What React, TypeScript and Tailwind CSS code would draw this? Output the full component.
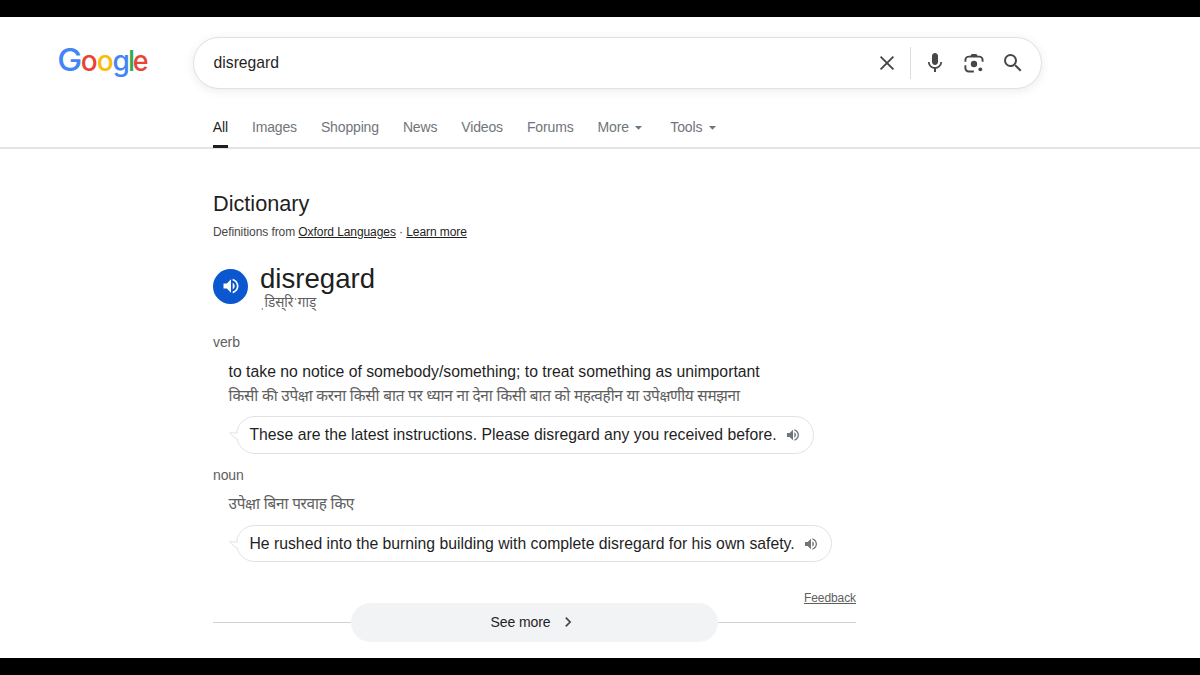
import { ReactNode } from "react";
import { MdArrowDropDown, MdMic, MdSearch, MdVolumeUp } from "react-icons/md";

interface Tab {
  label: string;
  active?: boolean;
  menu?: boolean;
}

const TABS: Tab[] = [
  { label: "All", active: true },
  { label: "Images" },
  { label: "Shopping" },
  { label: "News" },
  { label: "Videos" },
  { label: "Forums" },
  { label: "More", menu: true },
  { label: "Tools", menu: true },
];

export default function App() {
  return (
    <div className="flex h-[675px] w-[1200px] flex-col overflow-hidden border-t-[17px] border-b-[17px] border-black bg-white font-['Liberation_Sans','Noto_Sans',sans-serif] text-[#1f1f1f]">
      <header className="flex h-[132px] shrink-0 flex-col border-b-2 border-[#e3e3e3]">
        <div className="flex items-start pt-5">
          <div className="w-[193px] shrink-0 pt-1 pl-[58px]">
            <GoogleLogo />
          </div>
          <SearchBar />
        </div>
        <nav className="mt-auto -mb-px flex pl-[212.8px] text-[14px] leading-[16px] tracking-[-0.15px]">
          {TABS.map((tab) => (
            <TabLink key={tab.label} {...tab} />
          ))}
        </nav>
      </header>

      <main className="flex w-[643px] flex-col ml-[213px]">
        <h2 className="mt-[41px] text-[21.7px] leading-[28px]">Dictionary</h2>
        <p className="mt-[6px] text-[12px] leading-[16px] tracking-[-0.08px] text-[#474747]">
          Definitions from{" "}
          <a className="text-[#1f1f1f] underline">Oxford Languages</a> ·{" "}
          <a className="text-[#1f1f1f] underline">Learn more</a>
        </p>

        <div className="mt-[22px] flex h-[52px] gap-3">
          <button
            type="button"
            aria-label="Listen"
            className="mt-[6.5px] flex size-[35px] shrink-0 items-center justify-center rounded-full bg-[#0b57d0] text-white"
          >
            <MdVolumeUp className="size-5" />
          </button>
          <div>
            <h1 className="text-[27.6px] leading-[34px]">disregard</h1>
            <p className="text-[13.5px] leading-[14px] text-[#5e5e5e]">
              ˌडिस्‌रिˈगाड्
            </p>
          </div>
        </div>

        <p className="mt-[19px] text-[14px] leading-[18px] tracking-[-0.1px] text-[#5e5e5e]">
          verb
        </p>
        <div className="mt-[9px] pl-[15.6px]">
          <p className="text-[15.78px] leading-[24px]">
            to take no notice of somebody/something; to treat something as
            unimportant
          </p>
          <p className="text-[15.3px] leading-[24px] tracking-[-0.3px] whitespace-nowrap text-[#5e5e5e]">
            किसी की उपेक्षा करना किसी बात पर ध्यान ना देना किसी बात को महत्वहीन
            या उपेक्षणीय समझना
          </p>
          <Example className="mt-[8px] h-[38px]">
            These are the latest instructions. Please disregard any you received
            before.
          </Example>
        </div>

        <p className="mt-[12px] text-[14px] leading-[18px] tracking-[-0.1px] text-[#5e5e5e]">
          noun
        </p>
        <div className="mt-[8px] pl-[15.6px]">
          <p className="text-[15.3px] leading-[24px] tracking-[-0.3px] text-[#5e5e5e]">
            उपेक्षा बिना परवाह किए
          </p>
          <Example className="mt-[9px] h-[37px]">
            He rushed into the burning building with complete disregard for his
            own safety.
          </Example>
        </div>

        <a className="mt-[28px] self-end text-[12px] leading-[16px] tracking-[-0.08px] text-[#5e5e5e] underline">
          Feedback
        </a>
        <div className="-mt-[3px] flex items-center">
          <span className="h-px flex-1 bg-[#d2d2d2]" />
          <button
            type="button"
            className="flex h-[39px] w-[367px] items-center justify-center rounded-full bg-[#f2f3f5] pr-[5px] pb-px text-[14px] tracking-[-0.1px]"
          >
            See more
            <svg viewBox="0 0 10 12" className="ml-[13px] h-3 w-2.5">
              <path
                d="M2.8 1.7 7.1 6 2.8 10.3"
                fill="none"
                stroke="#474747"
                strokeWidth="1.7"
              />
            </svg>
          </button>
          <span className="h-px flex-1 bg-[#d2d2d2]" />
        </div>
      </main>
    </div>
  );
}

function GoogleLogo() {
  return (
    <svg
      viewBox="0 0 96 42"
      className="h-[42px] w-[96px] overflow-visible font-['Inter',sans-serif] text-[28px] font-medium"
      role="img"
      aria-label="Google"
    >
      <text
        y="29.5"
        x="-0.8"
        textLength="25"
        lengthAdjust="spacingAndGlyphs"
        className="text-[31px]"
        fill="#4285f4"
      >
        G
      </text>
      <text y="29.5" x="22.8" fill="#ea4335">o</text>
      <text y="29.5" x="38.8" fill="#fbbc05">o</text>
      <text y="29.5" x="54.4" fill="#4285f4">g</text>
      <text y="29.5" x="70" fill="#34a853">l</text>
      <text
        y="29.5"
        x="74.8"
        textLength="15.8"
        lengthAdjust="spacingAndGlyphs"
        fill="#ea4335"
      >
        e
      </text>
    </svg>
  );
}

function SearchBar() {
  return (
    <div className="flex h-[52px] w-[849px] items-center rounded-full border border-[#dfe1e5] bg-white pl-[19.6px] text-[#474747] shadow-[0_2px_10px_rgba(60,64,67,0.1)]">
      <span className="flex-1 text-[15.7px] text-[#1f1f1f]">disregard</span>
      <svg viewBox="0 0 16 16" className="size-4">
        <path
          d="M1.6 1.6 14.4 14.4M14.4 1.6 1.6 14.4"
          stroke="currentColor"
          strokeWidth="1.9"
        />
      </svg>
      <span className="ml-[15px] h-8 w-px bg-[#dadce0]" />
      <MdMic className="ml-[12px] size-6" />
      <LensIcon />
      <MdSearch className="mr-[16px] mb-px ml-[17px] size-6" />
    </div>
  );
}

function LensIcon() {
  return (
    <svg viewBox="0 0 20 20" className="ml-[17px] size-5" fill="currentColor">
      <g fill="none" stroke="currentColor" strokeWidth="1.9">
        <path d="M1.4 8.8V6.9a3.3 3.3 0 0 1 3.3-3.3h10.6a3.3 3.3 0 0 1 3.3 3.3v1.9" />
        <path d="M1.4 12.2v3a3.3 3.3 0 0 0 3.3 3.3h5.2" />
      </g>
      <path d="M7.6 1.1h4.8l1.4 2.2H6.2z" />
      <circle cx="10" cy="11" r="3.2" />
      <circle cx="16.3" cy="16.3" r="1.9" />
    </svg>
  );
}

function TabLink({ label, active, menu }: Tab) {
  return (
    <a
      className={
        active
          ? "mr-6 flex h-[29px] items-start border-b-[3px] border-[#1f1f1f] text-[#1f1f1f]"
          : menu
            ? "mr-[23px] flex h-[29px] items-start text-[#70757a]"
            : "mr-6 flex h-[29px] items-start text-[#70757a]"
      }
    >
      {label}
      {menu && <MdArrowDropDown className="ml-[1.5px] size-[17px]" />}
    </a>
  );
}

interface ExampleProps {
  children: ReactNode;
  className?: string;
}

/* Usage sentence in a speech bubble, the tail points left */
function Example({ children, className }: ExampleProps) {
  return (
    <div className={`flex ${className ?? ""}`}>
      <div className="relative ml-[7.4px] flex items-center rounded-full border border-[#e0e2e6] pr-[12px] pl-[12.5px] text-[15.75px] whitespace-nowrap">
        <svg viewBox="0 0 12 12" className="absolute top-3 -left-2 size-3">
          <path d="M9 3.5H1l7 7z" fill="#fff" />
          <path
            d="M9 3.5C6 4.6 3 4 .8 3c1 3 4 5 7.8 7.5"
            fill="#fff"
            stroke="#e0e2e6"
          />
        </svg>
        {children}
        <MdVolumeUp className="ml-2 size-4 text-[#70757a]" />
      </div>
    </div>
  );
}
